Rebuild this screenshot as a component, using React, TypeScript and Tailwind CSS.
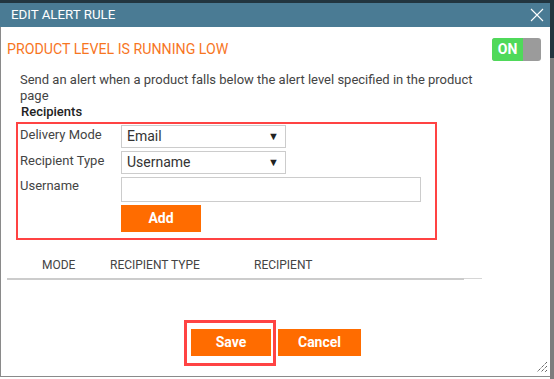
function CloseIcon() {
  return (
    <svg width="14" height="14" viewBox="0 0 14 14" className="text-white">
      <path d="M1 1L13 13M13 1L1 13" stroke="currentColor" strokeWidth="1.1" fill="none" />
    </svg>
  )
}

function ResizeGrip() {
  return (
    <svg width="12" height="12" viewBox="0 0 12 12" className="absolute bottom-[3px] right-[2px]">
      <path
        d="M11 1L1 11M11 5L5 11M11 9L9 11"
        stroke="#222"
        strokeWidth="1"
        strokeDasharray="1 1"
        fill="none"
      />
    </svg>
  )
}

function SelectBox({ value }: { value: string }) {
  return (
    <div className="flex h-[23px] w-[165px] items-center justify-between border border-[#cccccc] bg-white pl-[5px] pr-[6px] text-[14px] text-[#333]">
      <span>{value}</span>
      <span className="text-[11px] leading-none text-[#222]">▼</span>
    </div>
  )
}

export default function App() {
  return (
    <div className="flex h-[379px] w-[554px] flex-col overflow-hidden bg-white font-['Roboto',sans-serif]">
      <div className="h-[3px] shrink-0 bg-[#22353f]" />
      <div className="flex flex-1">
        <div className="relative flex h-[374px] w-[550px] shrink-0 flex-col border-b border-l border-[#8a8a8a] bg-white">
          <div className="-ml-px flex h-[24px] shrink-0 items-center justify-between bg-[#4a7b94] pl-[11px] pr-[6px]">
            <span className="text-[13.3px] leading-none text-white">EDIT ALERT RULE</span>
            <CloseIcon />
          </div>

          <div className="mt-[11px] flex h-[23px] items-center justify-between pl-[6px] pr-[9px]">
            <h1 className="text-[14.2px] leading-none text-[#f7761f]">PRODUCT LEVEL IS RUNNING LOW</h1>
            <div className="flex h-[23px] w-[49px] overflow-hidden rounded-[3px] bg-[#9b9b9b]">
              <div className="flex w-[31px] items-center justify-center bg-[#4fd95a] text-[14px] font-bold text-white">
                ON
              </div>
            </div>
          </div>

          <p className="mt-[11px] pl-[19px] pr-[20px] text-[13px] leading-[16px] text-[#444]">
            Send an alert when a product falls below the alert level specified in the product
            <br />
            page
          </p>
          <h2 className="pl-[20px] text-[13px] font-medium leading-[16px] text-[#222]">Recipients</h2>

          <div className="ml-[15px] mt-[2px] flex w-[421px] flex-col gap-[3px] border-2 border-[#ff4343] pb-[6px] pl-[2px] pt-px">
            <div className="flex">
              <label className="w-[101px] pt-[2px] text-[13px] leading-[16px] text-[#444]">Delivery Mode</label>
              <SelectBox value="Email" />
            </div>
            <div className="flex">
              <label className="w-[101px] pt-[2px] text-[13px] leading-[16px] text-[#444]">Recipient Type</label>
              <SelectBox value="Username" />
            </div>
            <div className="flex">
              <label className="w-[101px] pt-[1px] text-[13px] leading-[16px] text-[#444]">Username</label>
              <div className="h-[25px] w-[300px] border border-[#cccccc] bg-white" />
            </div>
            <div className="flex pl-[101px]">
              <button className="h-[27px] w-[80px] bg-[#ff6c00] text-[14px] font-bold text-white">Add</button>
            </div>
          </div>

          <div className="ml-[6px] mt-[12px] w-[475px]">
            <div className="flex h-[26px] items-center text-[12px] text-[#444]">
              <span className="w-[103px] pl-[35px]">MODE</span>
              <span className="w-[144px]">RECIPIENT TYPE</span>
              <span>RECIPIENT</span>
            </div>
            <div className="flex items-start">
              <div className="h-[2px] flex-1 bg-[#cccccc]" />
              <div className="h-px w-[18px] bg-[#d6d6d6]" />
            </div>
          </div>

          <div className="mt-[40px] flex items-start pl-[183px]">
            <div className="border-[3px] border-[#ff4343] pb-[7px] pl-[4px] pr-[2px] pt-[6px]">
              <button className="h-[27px] w-[80px] bg-[#ff6c00] text-[14px] font-bold text-white">Save</button>
            </div>
            <button className="ml-[2px] mt-[9px] h-[27px] w-[83px] bg-[#ff6c00] text-[14px] font-bold text-white">
              Cancel
            </button>
          </div>

          <ResizeGrip />
        </div>
        <div className="flex w-[4px] flex-col">
          <div className="h-[55px] bg-[#22353f]" />
          <div className="flex-1 bg-[#7d7d7d]" />
        </div>
      </div>
    </div>
  )
}
